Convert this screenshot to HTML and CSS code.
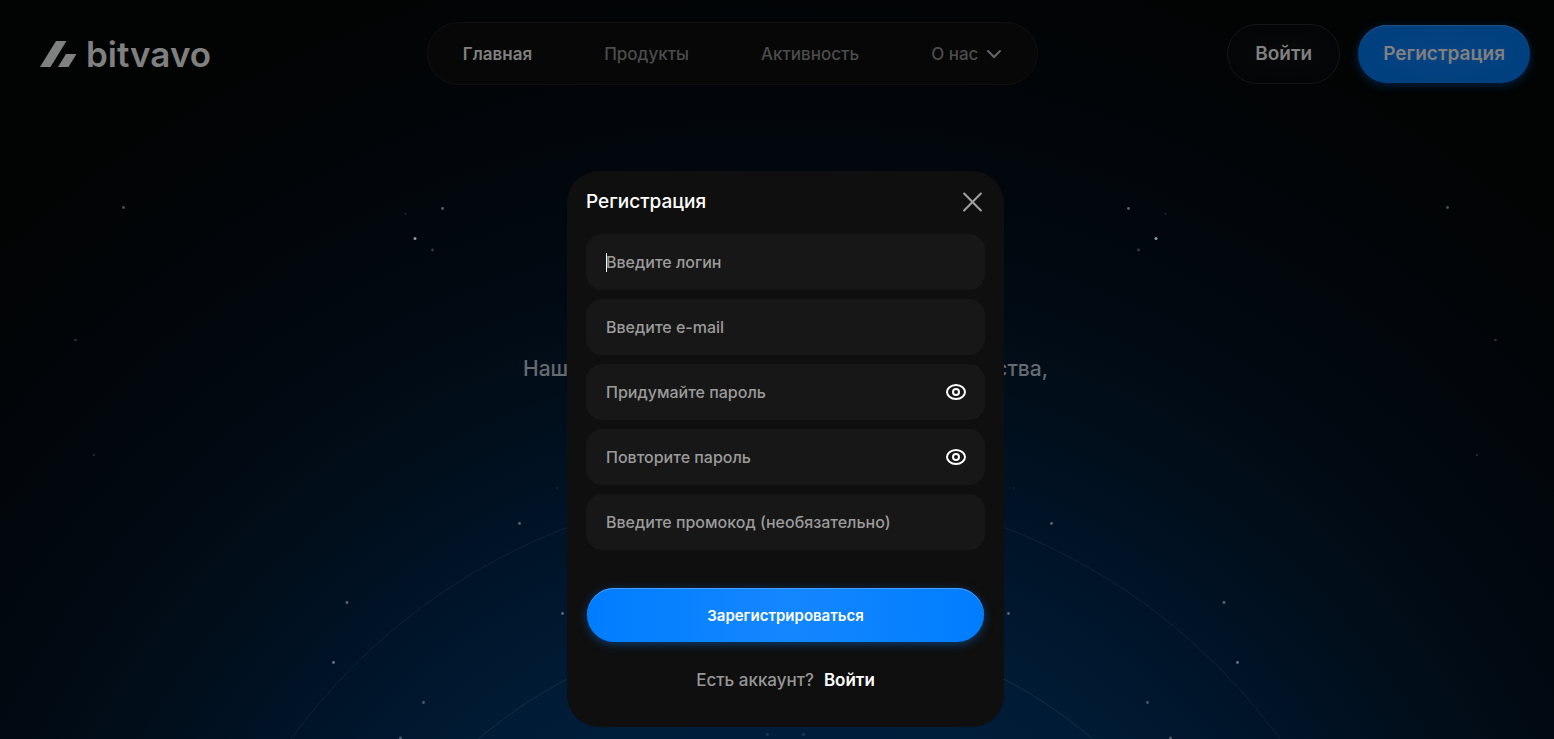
FILE: index.html
```html
<!DOCTYPE html>
<html lang="ru">
<head>
<meta charset="utf-8">
<meta name="viewport" content="width=device-width, initial-scale=1">
<title>bitvavo</title>
<link rel="stylesheet" href="styles.css">
</head>
<body>
<div class="page">
  <svg class="sky" viewBox="0 0 1554 739" preserveAspectRatio="xMidYMin slice" aria-hidden="true">
    <defs>
      <radialGradient id="glow" gradientUnits="userSpaceOnUse" cx="785" cy="1098" r="1160">
        <stop offset="0.3" stop-color="#001f3d"/>
        <stop offset="0.42" stop-color="#001a33"/>
        <stop offset="0.53" stop-color="#001327"/>
        <stop offset="0.64" stop-color="#010e1a"/>
        <stop offset="0.76" stop-color="#010810"/>
        <stop offset="0.9" stop-color="#020508"/>
        <stop offset="1" stop-color="#020404"/>
      </radialGradient>
    </defs>
    <rect width="1554" height="739" fill="url(#glow)"/>
    <g fill="none" stroke="#fff">
      <circle cx="785.5" cy="1098" r="611" stroke-opacity="0.06"/>
      <circle cx="785.5" cy="1098" r="472.5" stroke-opacity="0.08"/>
    </g>
    <g fill="#8fa0ad">
      <g id="stars">
        <circle cx="123.5" cy="207.5" r="1.4" opacity="0.5"/>
        <circle cx="442.5" cy="208.5" r="1.4" opacity="0.6"/>
        <circle cx="405.5" cy="214" r="1.3" opacity="0.15"/>
        <circle cx="415" cy="238.5" r="1.5" opacity="0.95"/>
        <circle cx="432.5" cy="250" r="1.4" opacity="0.35"/>
        <circle cx="75.5" cy="340" r="1.3" opacity="0.3"/>
        <circle cx="94" cy="455" r="1.3" opacity="0.2"/>
        <circle cx="519.5" cy="523.5" r="1.4" opacity="0.6"/>
        <circle cx="557" cy="488" r="1.2" opacity="0.1"/>
        <circle cx="562.5" cy="613.5" r="1.4" opacity="0.6"/>
        <circle cx="347" cy="602.5" r="1.4" opacity="0.6"/>
        <circle cx="333.5" cy="662.5" r="1.4" opacity="0.7"/>
        <circle cx="423.5" cy="702.5" r="1.4" opacity="0.5"/>
        <circle cx="400.5" cy="738" r="1.4" opacity="0.5"/>
        <circle cx="767.5" cy="734.5" r="1.3" opacity="0.25"/>
      </g>
      <use href="#stars" transform="translate(1571 0) scale(-1 1)"/>
    </g>
  </svg>

  <header class="header">
    <a class="logo" href="#">
      <svg class="logo-mark" viewBox="0 0 37 26" aria-hidden="true"><path d="M16 0H26.500L10.500 26H0ZM26 13H36.500L28.500 26H18Z"/></svg>
      <span>bitvavo</span>
    </a>
    <nav class="nav">
      <a class="nav-item nav-item-active" href="#">Главная</a>
      <a class="nav-item" href="#">Продукты</a>
      <a class="nav-item" href="#">Активность</a>
      <button class="nav-item" type="button">О нас
        <svg class="chevron" viewBox="0 0 16 10" aria-hidden="true"><path d="M2 2L8 8L14 2"/></svg>
      </button>
    </nav>
    <div class="actions">
      <button class="pill pill-ghost" type="button">Войти</button>
      <button class="pill pill-primary" type="button">Регистрация</button>
    </div>
  </header>

  <main class="hero">
    <p class="lead"><span>Наш</span><span>ства,</span></p>
  </main>
</div>

<div class="overlay">
  <section class="modal" role="dialog" aria-labelledby="modal-title">
    <div class="modal-head">
      <h2 id="modal-title">Регистрация</h2>
      <button class="close" type="button" aria-label="Закрыть">
        <svg viewBox="0 0 20 20" aria-hidden="true"><path d="M2 2L18 18M18 2L2 18"/></svg>
      </button>
    </div>
    <form class="form">
      <div class="fields">
        <div class="field"><input class="input input-focused" type="text" placeholder="Введите логин" aria-label="Введите логин"></div>
        <div class="field"><input class="input" type="email" placeholder="Введите e-mail" aria-label="Введите e-mail"></div>
        <div class="field">
          <input class="input" type="password" placeholder="Придумайте пароль" aria-label="Придумайте пароль">
          <button class="reveal" type="button" aria-label="Показать пароль"><svg viewBox="0 0 22 18" aria-hidden="true"><path d="M11 2C5.500 2 2 5.800 2 9S5.500 16 11 16S20 12.200 20 9S16.500 2 11 2Z"/><circle cx="11" cy="9" r="3"/></svg></button>
        </div>
        <div class="field">
          <input class="input" type="password" placeholder="Повторите пароль" aria-label="Повторите пароль">
          <button class="reveal" type="button" aria-label="Показать пароль"><svg viewBox="0 0 22 18" aria-hidden="true"><path d="M11 2C5.500 2 2 5.800 2 9S5.500 16 11 16S20 12.200 20 9S16.500 2 11 2Z"/><circle cx="11" cy="9" r="3"/></svg></button>
        </div>
        <div class="field"><input class="input" type="text" placeholder="Введите промокод (необязательно)" aria-label="Введите промокод (необязательно)"></div>
      </div>
      <button class="submit" type="submit">Зарегистрироваться</button>
    </form>
    <p class="switch">Есть аккаунт? <a href="#">Войти</a></p>
  </section>
</div>
</body>
</html>
```
FILE: styles.css
```css
* {
  box-sizing: border-box;
}

body {
  margin: 0;
  background: #020405;
  color: #fff;
  font-family: Inter, "Open Sans", sans-serif;
  font-weight: 500;
}

button,
input {
  border: 0;
  padding: 0;
  background: none;
  color: inherit;
  font: inherit;
}

button {
  cursor: pointer;
}

a {
  color: inherit;
  text-decoration: none;
}

.page {
  position: relative;
  min-height: 100vh;
  overflow: hidden;
}

.sky {
  position: absolute;
  inset: 0;
  width: 100%;
  height: 100%;
}

.header {
  position: relative;
  display: flex;
  align-items: center;
  justify-content: space-between;
  padding: 22px 24px 0 40px;
}

.logo {
  display: flex;
  align-items: center;
  gap: 9px;
  min-width: 198px;
  color: #808080;
  font-size: 35px;
  font-weight: 600;
  line-height: 40px;
}

.logo-mark {
  width: 37px;
  height: 26px;
  fill: currentColor;
}

.nav {
  display: flex;
  align-items: center;
  gap: 72px;
  height: 63px;
  padding: 0 35px;
  border: 1px solid #101010;
  border-radius: 32px;
  background: #070707;
  font-size: 17px;
}

.nav-item {
  display: flex;
  align-items: center;
  gap: 8px;
  color: #4c4c4c;
}

.nav-item-active {
  color: #808080;
  font-weight: 600;
}

.chevron {
  width: 16px;
  height: 10px;
  fill: none;
  stroke: #666;
  stroke-width: 2;
  stroke-linecap: round;
}

.actions {
  display: flex;
  align-items: center;
  gap: 18px;
}

.pill {
  height: 58px;
  padding: 0 25px;
  border-radius: 30px;
  color: #808080;
  font-size: 19px;
  font-weight: 600;
}

.pill-ghost {
  height: 60px;
  padding: 0 27px;
  border: 1px solid #151617;
  background: radial-gradient(closest-side, #08090a, #040507);
}

.pill-primary {
  background: radial-gradient(closest-side, #094382, #00407f);
  box-shadow: inset 0 1px 0 #204f82, 0 2px 10px #00234a;
}

.hero {
  position: relative;
  padding: 270px 0 0 17px;
}

.lead {
  display: flex;
  justify-content: space-between;
  max-width: 525px;
  margin: 0 auto;
  color: #666b70;
  font-size: 21px;
  line-height: 28px;
}

.overlay {
  position: fixed;
  inset: 0;
  display: flex;
  align-items: center;
  justify-content: center;
  padding: 159px 0 0 17px;
}

.modal {
  width: 437px;
  max-width: 100%;
  padding: 18px 19px 34px;
  border-radius: 32px;
  background: #0f0f0f;
}

.modal-head {
  display: flex;
  align-items: center;
  justify-content: space-between;
  margin-bottom: 19px;
}

.modal-head h2 {
  margin: 0;
  font-size: 19px;
  font-weight: 500;
  line-height: 26px;
}

.close {
  display: flex;
  padding: 2px;
}

.close svg {
  width: 21px;
  height: 22px;
  stroke: #9f9f9f;
  stroke-width: 2;
  stroke-linecap: round;
}

.fields {
  display: grid;
  gap: 9px;
}

.field {
  position: relative;
}

.input {
  display: block;
  width: 100%;
  height: 56px;
  padding: 0 20px;
  border-radius: 16px;
  outline: none;
  background-color: #171717;
  font-size: 16px;
}

.input::placeholder {
  color: #9b9b9b;
  opacity: 1;
}

.input-focused {
  background-image: linear-gradient(#fff, #fff);
  background-position: 20px center;
  background-repeat: no-repeat;
  background-size: 1px 19px;
}

.reveal {
  position: absolute;
  top: 0;
  right: 18px;
  bottom: 0;
  display: flex;
  align-items: center;
}

.reveal svg {
  width: 22px;
  height: 18px;
  fill: none;
  stroke: #fff;
  stroke-width: 2;
}

.submit {
  display: block;
  width: calc(100% - 2px);
  height: 54px;
  margin: 38px auto 0;
  border-radius: 27px;
  background: linear-gradient(90deg, #007dff, #1487ff 50%, #007dff);
  box-shadow: inset 0 1px 0 #499fff, 0 2px 10px #0b3f73;
  font-size: 15px;
  font-weight: 600;
}

.switch {
  display: flex;
  justify-content: center;
  gap: 10px;
  margin: 25px 0 0;
  color: #979797;
  font-size: 17px;
  line-height: 26px;
}

.switch a {
  color: #fff;
  font-weight: 600;
}
```
